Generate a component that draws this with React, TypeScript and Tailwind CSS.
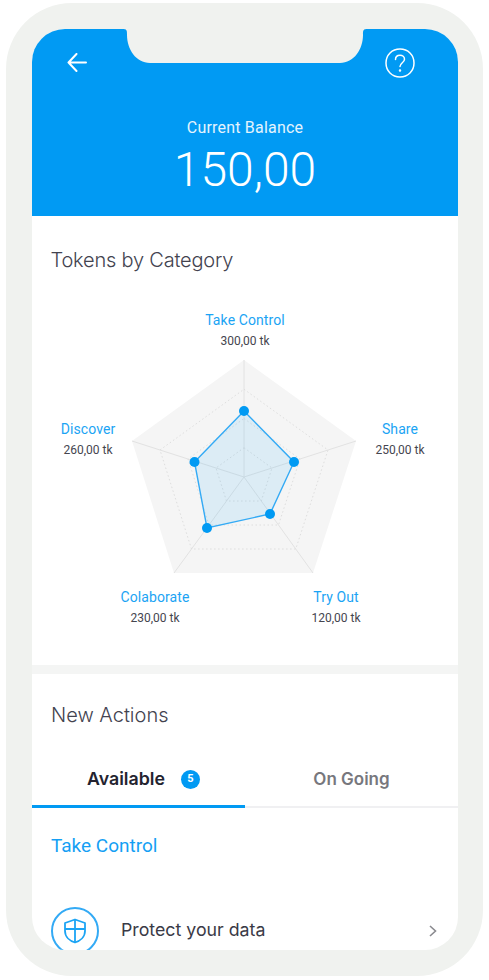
import React from "react";

const C = { x: 244, y: 477 };
const V: [number, number][] = [
  [244, 360],
  [356, 441],
  [313, 573],
  [174, 573],
  [132, 441],
];
const OX = 120;
const OY = 300;
const ring = (k: number) =>
  V.map(([x, y]) => `${C.x - OX + (x - C.x) * k},${C.y - OY + (y - C.y) * k}`).join(" ");
const P: [number, number][] = [
  [244, 411],
  [294, 462],
  [270, 514],
  [207, 528],
  [194.5, 462],
];

function Label({ title, value, left, top }: { title: string; value: string; left: string; top: string }) {
  return (
    <div className={`absolute flex w-[110px] flex-col items-center ${left} ${top}`}>
      <span className="text-[14px] leading-[20px] text-[#1ba4f4] tracking-[0.1px]">{title}</span>
      <span className="mt-[1px] text-[12px] leading-[20px] text-[#45454f]">{value}</span>
    </div>
  );
}

export default function App() {
  return (
    <div className="h-[980px] w-[489px] overflow-hidden bg-white pl-[6px] pt-[3px] font-['Roboto',sans-serif]">
      <div className="h-[973px] w-[477px] rounded-[66px] bg-[#f0f2ef] pl-[26px] pt-[26px]">
        <div className="relative h-[921px] w-[426px] overflow-hidden rounded-[33px] bg-white">
          <svg className="absolute left-[90px] top-0" width="246" height="35" viewBox="0 0 246 35">
            <path
              d="M0 0 H246 V0 C241 0 241 1 241 6 C241 20 232 34 218 34 H28 C14 34 5 20 5 6 C5 1 5 0 0 0 Z"
              fill="#f0f2ef"
            />
          </svg>
          <header className="flex h-[187px] flex-col items-center bg-[#019af3] text-white">
            <div className="flex w-full items-start justify-between pl-[35px] pr-[43px] pt-[19px]">
              <svg className="mt-[5px]" width="20" height="20" viewBox="0 0 20 20" fill="none" stroke="white" strokeWidth="2" strokeLinecap="round" strokeLinejoin="round">
                <path d="M1.5 9.5H19M9.5 1L1.5 9.5L9.5 18" />
              </svg>
              <svg width="30" height="30" viewBox="0 0 30 30" fill="none" stroke="white" strokeWidth="1.5" strokeLinecap="round" strokeLinejoin="round">
                <path d="M15 1C23 1 29 7 29 15C29 23 23 29 15 29C7 29 1 23 1 15C1 7 7 1 15 1Z" />
                <path d="M10.5 11.5C10.5 8.8 12.5 7.2 15 7.2C17.5 7.2 19.5 8.8 19.5 11.2C19.5 14.5 15 15 15 18.5" />
                <circle cx="15" cy="22.5" r="0.5" fill="white" />
              </svg>
            </div>
            <p className="mt-[40px] text-[16px] leading-[20px] tracking-[0.2px] text-[#e4f4fe]">Current Balance</p>
            <p className="mt-[4px] text-[48px] font-light leading-[56px]">150,00</p>
          </header>

          <section className="h-[449px] pl-[18.5px] pt-[30px]">
            <h2 className="font-['Inter',sans-serif] text-[20px] font-light leading-[28px] tracking-[-0.2px] text-[#43434f]">Tokens by Category</h2>
          </section>

          <svg className="absolute left-[88px] top-[271px]" width="250" height="300" viewBox="0 0 250 300">
            <polygon points={ring(1)} fill="#f5f5f5" />
            {V.map(([x, y], i) => (
              <line key={i} x1={C.x - OX} y1={C.y - OY} x2={x - OX} y2={y - OY} stroke="#e2e2e2" strokeWidth="1" />
            ))}
            {[0.75, 0.5, 0.25].map((k) => (
              <polygon key={k} points={ring(k)} fill="none" stroke="#dedede" strokeWidth="1" strokeDasharray="1.5 2.5" />
            ))}
            <polygon
              points={P.map(([x, y]) => `${x - OX},${y - OY}`).join(" ")}
              fill="#019af3"
              fillOpacity="0.1"
              stroke="#33aaf5"
              strokeWidth="1.4"
            />
            {P.map(([x, y], i) => (
              <circle key={i} cx={x - OX} cy={y - OY} r="5" fill="#019af3" />
            ))}
          </svg>

          <Label title="Take Control" value="300,00 tk" left="left-[158px]" top="top-[281px]" />
          <Label title="Share" value="250,00 tk" left="left-[313px]" top="top-[390px]" />
          <Label title="Try Out" value="120,00 tk" left="left-[249px]" top="top-[558px]" />
          <Label title="Colaborate" value="230,00 tk" left="left-[68px]" top="top-[558px]" />
          <Label title="Discover" value="260,00 tk" left="left-[1px]" top="top-[390px]" />

          <div className="h-[9px] bg-[#f4f5f4]" />

          <section className="pt-[27px]">
            <h2 className="pl-[19px] font-['Inter',sans-serif] text-[20px] font-light leading-[28px] text-[#43434f]">New Actions</h2>
            <div className="mt-[25px] flex h-[54px] border-b-2 border-[#f0f0f2]">
              <div className="-mb-[2px] flex w-[213px] items-center justify-center gap-[16px] border-b-[3px] border-[#019af3] pl-[10px]">
                <span className="font-['Inter',sans-serif] text-[17.8px] font-semibold text-[#23232f]">Available</span>
                <span className="flex h-[19px] w-[19px] items-center justify-center rounded-full bg-[#019af3] text-[11px] font-bold text-white">5</span>
              </div>
              <div className="flex flex-1 items-center justify-center">
                <span className="font-['Inter',sans-serif] text-[17px] font-semibold text-[#77777d]">On Going</span>
              </div>
            </div>
            <h3 className="mt-[25px] pl-[19px] text-[19px] leading-[26px] text-[#159ff4]">Take Control</h3>
            <div className="mt-[48px] flex items-center pl-[19px] pr-[21px]">
              <div className="flex h-[48px] w-[48px] shrink-0 items-center justify-center rounded-full border-2 border-[#33aaf5]">
                <svg width="24" height="26" viewBox="0 0 24 26" fill="none" stroke="#1ba4f4" strokeWidth="1.8" strokeLinejoin="round">
                  <path d="M12 1.5L22 5V13C22 19 17 23 12 24.5C7 23 2 19 2 13V5Z" />
                  <path d="M12 1.5V24.5M2 11H22" />
                </svg>
              </div>
              <span className="ml-[22px] flex-1 -translate-y-[1px] font-['Inter',sans-serif] text-[17.75px] leading-[24px] text-[#3a3a46]">Protect your data</span>
              <svg width="8" height="12" viewBox="0 0 8 12" fill="none" stroke="#8a8a8f" strokeWidth="1.6">
                <path d="M1 1L6.5 6L1 11" />
              </svg>
            </div>
          </section>
        </div>
      </div>
    </div>
  );
}
